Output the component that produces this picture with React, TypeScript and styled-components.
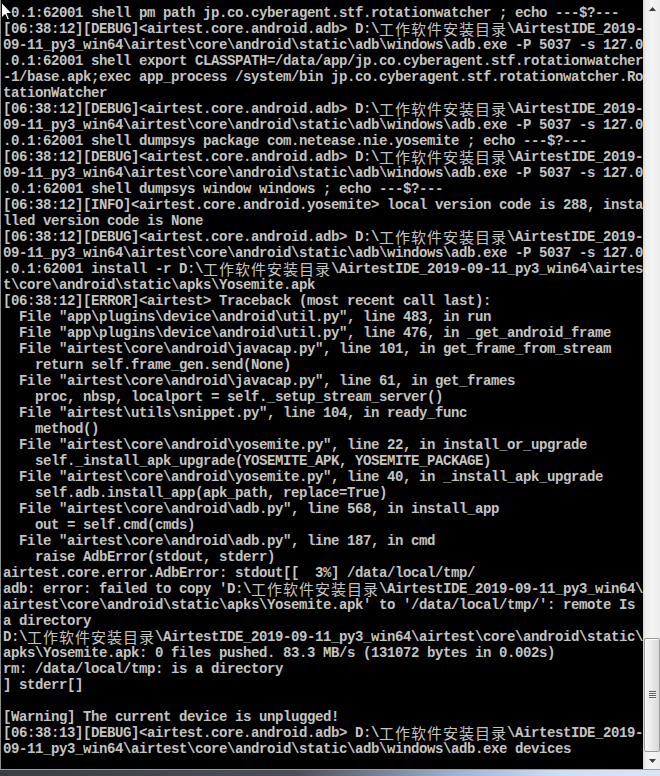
import React from "react";
import styled, { createGlobalStyle } from "styled-components";

const GlobalStyle = createGlobalStyle`
  html, body { margin: 0; padding: 0; background: #000; }
  body { overflow: hidden; }
`;

const lines: string[] = [
  ".0.1:62001 shell pm path jp.co.cyberagent.stf.rotationwatcher ; echo ---$?---",
  "[06:38:12][DEBUG]<airtest.core.android.adb> D:\\工作软件安装目录\\AirtestIDE_2019-",
  "09-11_py3_win64\\airtest\\core\\android\\static\\adb\\windows\\adb.exe -P 5037 -s 127.0",
  ".0.1:62001 shell export CLASSPATH=/data/app/jp.co.cyberagent.stf.rotationwatcher",
  "-1/base.apk;exec app_process /system/bin jp.co.cyberagent.stf.rotationwatcher.Ro",
  "tationWatcher",
  "[06:38:12][DEBUG]<airtest.core.android.adb> D:\\工作软件安装目录\\AirtestIDE_2019-",
  "09-11_py3_win64\\airtest\\core\\android\\static\\adb\\windows\\adb.exe -P 5037 -s 127.0",
  ".0.1:62001 shell dumpsys package com.netease.nie.yosemite ; echo ---$?---",
  "[06:38:12][DEBUG]<airtest.core.android.adb> D:\\工作软件安装目录\\AirtestIDE_2019-",
  "09-11_py3_win64\\airtest\\core\\android\\static\\adb\\windows\\adb.exe -P 5037 -s 127.0",
  ".0.1:62001 shell dumpsys window windows ; echo ---$?---",
  "[06:38:12][INFO]<airtest.core.android.yosemite> local version code is 288, insta",
  "lled version code is None",
  "[06:38:12][DEBUG]<airtest.core.android.adb> D:\\工作软件安装目录\\AirtestIDE_2019-",
  "09-11_py3_win64\\airtest\\core\\android\\static\\adb\\windows\\adb.exe -P 5037 -s 127.0",
  ".0.1:62001 install -r D:\\工作软件安装目录\\AirtestIDE_2019-09-11_py3_win64\\airtes",
  "t\\core\\android\\static\\apks\\Yosemite.apk",
  "[06:38:12][ERROR]<airtest> Traceback (most recent call last):",
  "  File \"app\\plugins\\device\\android\\util.py\", line 483, in run",
  "  File \"app\\plugins\\device\\android\\util.py\", line 476, in _get_android_frame",
  "  File \"airtest\\core\\android\\javacap.py\", line 101, in get_frame_from_stream",
  "    return self.frame_gen.send(None)",
  "  File \"airtest\\core\\android\\javacap.py\", line 61, in get_frames",
  "    proc, nbsp, localport = self._setup_stream_server()",
  "  File \"airtest\\utils\\snippet.py\", line 104, in ready_func",
  "    method()",
  "  File \"airtest\\core\\android\\yosemite.py\", line 22, in install_or_upgrade",
  "    self._install_apk_upgrade(YOSEMITE_APK, YOSEMITE_PACKAGE)",
  "  File \"airtest\\core\\android\\yosemite.py\", line 40, in _install_apk_upgrade",
  "    self.adb.install_app(apk_path, replace=True)",
  "  File \"airtest\\core\\android\\adb.py\", line 568, in install_app",
  "    out = self.cmd(cmds)",
  "  File \"airtest\\core\\android\\adb.py\", line 187, in cmd",
  "    raise AdbError(stdout, stderr)",
  "airtest.core.error.AdbError: stdout[[  3%] /data/local/tmp/",
  "adb: error: failed to copy 'D:\\工作软件安装目录\\AirtestIDE_2019-09-11_py3_win64\\",
  "airtest\\core\\android\\static\\apks\\Yosemite.apk' to '/data/local/tmp/': remote Is",
  "a directory",
  "D:\\工作软件安装目录\\AirtestIDE_2019-09-11_py3_win64\\airtest\\core\\android\\static\\",
  "apks\\Yosemite.apk: 0 files pushed. 83.3 MB/s (131072 bytes in 0.002s)",
  "rm: /data/local/tmp: is a directory",
  "] stderr[]",
  "",
  "[Warning] The current device is unplugged!",
  "[06:38:13][DEBUG]<airtest.core.android.adb> D:\\工作软件安装目录\\AirtestIDE_2019-",
  "09-11_py3_win64\\airtest\\core\\android\\static\\adb\\windows\\adb.exe devices",
];

const Window = styled.div`
  width: 660px;
  height: 776px;
  display: flex;
  flex-direction: column;
  position: relative;
  overflow: hidden;
`;

const Main = styled.div`
  display: flex;
  flex: 1;
  min-height: 0;
`;

const Console = styled.div`
  flex: 1;
  background: #000;
  border-left: 1px solid #8c8c8c;
  padding: 5px 0 0 2px;
  overflow: hidden;
`;

const Row = styled.div`
  height: 16px;
  line-height: 16px;
  white-space: pre;
  color: #c4c4c4;
  font-family: "Liberation Mono", "DejaVu Sans Mono", monospace;
  font-weight: bold;
  font-size: 14px;
  letter-spacing: -0.4px;
`;

const Cjk = styled.span`
  display: inline-block;
  vertical-align: top;
  height: 16px;
  line-height: 16px;
  font-family: "Noto Sans CJK SC", sans-serif;
  font-weight: normal;
  font-size: 15px;
  letter-spacing: 1px;
`;

const ScrollBar = styled.div`
  width: 17px;
  display: flex;
  flex-direction: column;
  background: linear-gradient(to right, #e2e2e2 0px, #eeeeee 2px, #f4f4f4 8px, #ececec 17px);
  border-left: 1px solid #d6d6d6;
  box-sizing: border-box;
`;

const ArrowButton = styled.div`
  height: 17px;
  display: flex;
  align-items: center;
  justify-content: center;
`;

const Track = styled.div`
  flex: 1;
  display: flex;
  flex-direction: column;
  justify-content: flex-end;
`;

const Thumb = styled.div<{ $h: number }>`
  height: ${(p) => p.$h}px;
  border: 1px solid #9a9a9a;
  border-radius: 2px;
  background: linear-gradient(to right, #f6f6f6 0%, #eaeaea 45%, #d8d8d8 100%);
  box-shadow: inset 1px 1px 0 #fdfdfd;
  display: flex;
  align-items: center;
  justify-content: center;
  box-sizing: border-box;
`;

const Grip = styled.div`
  width: 7px;
  height: 8px;
  background: repeating-linear-gradient(to bottom, #5e5e5e 0px, #5e5e5e 1px, #f2f2f2 1px, #f2f2f2 2px);
`;

const FrameEdge = styled.div`
  height: 7px;
  border-top: 1px solid #9aa0a6;
  box-sizing: border-box;
  background: linear-gradient(to right, #3a3f45 0%, #4a5058 45%, #9fb7d2 70%, #cddff2 85%, #d7e6f5 100%);
`;

const Cursor = styled.svg`
  position: absolute;
  left: 0;
  top: 1px;
`;

function renderLine(text: string) {
  const parts = text.split(/([\u4e00-\u9fff]+)/);
  return parts.map((p, i) =>
    /[\u4e00-\u9fff]/.test(p) ? <Cjk key={i}>{p}</Cjk> : <React.Fragment key={i}>{p}</React.Fragment>
  );
}

export default function App() {
  return (
    <Window>
      <GlobalStyle />
      <Main>
        <Console>
          {lines.map((l, i) => (
            <Row key={i}>{l === "" ? " " : renderLine(l)}</Row>
          ))}
        </Console>
        <ScrollBar>
          <ArrowButton>
            <svg width="7" height="4" viewBox="0 0 7 4">
              <path d="M0 4 L3.5 0 L7 4 Z" fill="#3c3c3c" />
            </svg>
          </ArrowButton>
          <Track>
            <Thumb $h={114}>
              <Grip />
            </Thumb>
          </Track>
          <ArrowButton>
            <svg width="7" height="4" viewBox="0 0 7 4">
              <path d="M0 0 L7 0 L3.5 4 Z" fill="#3c3c3c" />
            </svg>
          </ArrowButton>
        </ScrollBar>
      </Main>
      <FrameEdge />
      <Cursor width="13" height="20" viewBox="0 0 13 20">
        <path
          d="M1.5 1.5 L1.5 17 L5 13.5 L7.5 19 L9.5 18 L7 12.5 L12 12.5 Z"
          fill="#ffffff"
          stroke="#000000"
          strokeWidth="1"
          strokeLinejoin="miter"
        />
      </Cursor>
    </Window>
  );
}
